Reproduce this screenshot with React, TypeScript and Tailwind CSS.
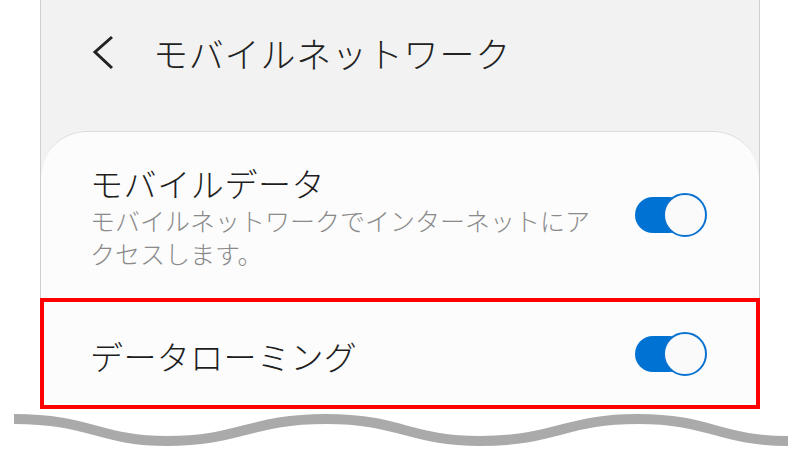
const JP = { fontFamily: '"Noto Sans CJK JP", "Noto Sans", sans-serif' };

function Toggle() {
  return (
    <div className="relative w-[72px] h-[44px] shrink-0">
      <div className="absolute left-0 top-[4px] w-[52px] h-[36px] rounded-full bg-[#0072d3]" />
      <div className="absolute right-0 top-0 w-[44px] h-[44px] rounded-full border-2 border-[#0a72d0] bg-[#fafafa]" />
    </div>
  );
}

export default function App() {
  return (
    <div className="relative w-[800px] h-[460px] bg-white overflow-hidden" style={JP}>
      {/* phone screen */}
      <div className="ml-[40px] w-[720px] h-[409px] border-x border-[#cfcfcf] bg-[#f2f2f2] flex flex-col">
        {/* header */}
        <div className="h-[131px] flex items-start pt-[34px] pl-[51px]">
          <svg width="24" height="36" viewBox="0 0 24 36" className="mt-[1px]">
            <polyline points="20,2 3,17 20,33" fill="none" stroke="#222" strokeWidth="3" />
          </svg>
          <span className="ml-[37px] text-[35px] leading-[38px] tracking-[0.8px] font-light text-[#222]">
            モバイルネットワーク
          </span>
        </div>

        {/* card */}
        <div className="flex-1 flex flex-col bg-[#fcfcfc] rounded-t-[46px] border-t border-[#dcdcdc]">
          <div className="h-[166px] flex items-center justify-between pl-[49px] pr-[52px]">
            <div className="pt-[4px]">
              <div className="text-[33px] leading-[36px] tracking-[0.6px] font-light text-[#1e1e1e]">モバイルデータ</div>
              <div className="w-[510px] mt-[3px] text-[25px] leading-[33px] font-light text-[#8a8a8a]">
                モバイルネットワークでインターネットにアクセスします。
              </div>
            </div>
            <Toggle />
          </div>
          <div className="mx-[40px] h-px bg-[#e6e6e6]" />
          <div className="flex-1 flex items-center justify-between pl-[49px] pr-[52px]">
            <div className="pt-[3px] text-[33px] leading-[40px] tracking-[0.4px] font-light text-[#1e1e1e]">データローミング</div>
            <Toggle />
          </div>
        </div>
      </div>

      {/* highlight box */}
      <div className="absolute left-[40px] top-[298px] w-[720px] h-[111px] border-4 border-[#ff0000]" />

      {/* cut mark */}
      <svg width="800" height="50" viewBox="0 410 800 50" className="block">
        <path
          d="M14 420 C90 420 100 442 167 442 C240 442 250 420 326 420 C400 420 410 442 480 442 C555 442 565 420 638 420 C710 420 720 442 788 442"
          fill="none"
          stroke="#aaaaaa"
          strokeWidth="10"
        />
      </svg>
    </div>
  );
}
